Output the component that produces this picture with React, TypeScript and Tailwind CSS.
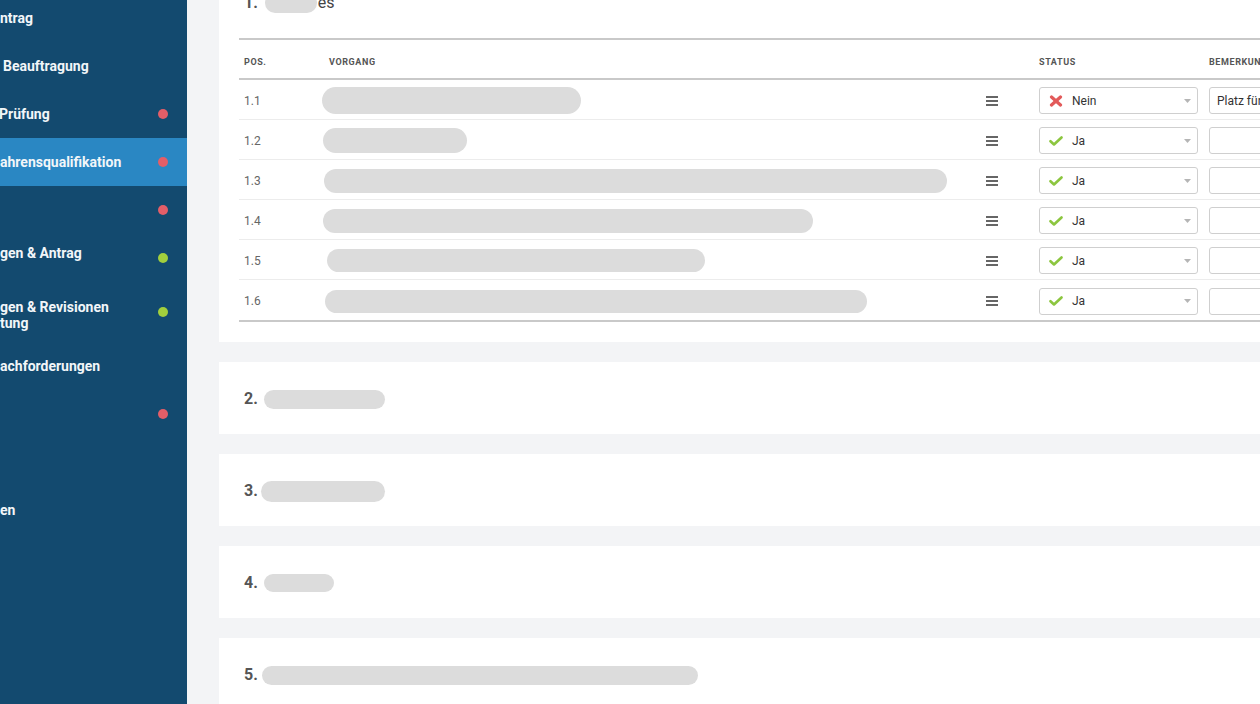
import React from 'react';

interface NavItem {
  lines: string[];
  dot?: 'red' | 'green';
  active?: boolean;
  shift?: string;
}

const navItems: NavItem[] = [
  { lines: ['ntrag'] },
  { lines: ['Beauftragung'], shift: 'pl-[3px]' },
  { lines: ['Prüfung'], dot: 'red', shift: '-ml-[1px]' },
  { lines: ['ahrensqualifikation'], dot: 'red', active: true },
  { lines: [], dot: 'red' },
  { lines: ['gen & Antrag', ''], dot: 'green' },
  { lines: ['gen & Revisionen', 'tung'], dot: 'green' },
  { lines: ['achforderungen'] },
  { lines: [], dot: 'red' },
  { lines: [] },
  { lines: ['en'] },
  { lines: [] },
  { lines: [] },
  { lines: [] },
];

interface Row {
  pos: string;
  pill: string;
  ok: boolean;
  note?: string;
}

const rows: Row[] = [
  { pos: '1.1', pill: 'ml-[-2px] w-[259px] h-[27px]', ok: false, note: 'Platz für Bemerkungen' },
  { pos: '1.2', pill: 'ml-[-1px] w-[144px] h-[25px]', ok: true },
  { pos: '1.3', pill: 'ml-0 w-[623px] h-[24px]', ok: true },
  { pos: '1.4', pill: 'ml-[-1px] w-[490px] h-[24px]', ok: true },
  { pos: '1.5', pill: 'ml-[3px] w-[378px] h-[23px]', ok: true },
  { pos: '1.6', pill: 'ml-[1px] w-[542px] h-[23px]', ok: true },
];

const sections = [
  { no: '2.', pill: 'ml-[6px] w-[121px] h-[19px]' },
  { no: '3.', pill: 'ml-[3px] w-[124px] h-[21px]' },
  { no: '4.', pill: 'ml-[6px] w-[70px] h-[18px]' },
  { no: '5.', pill: 'ml-[4px] w-[436px] h-[19px]' },
];

const MenuIcon = () => (
  <svg width="12" height="10" viewBox="0 0 12 10" fill="#666">
    <rect x="0" y="0" width="12" height="2" />
    <rect x="0" y="4" width="12" height="2" />
    <rect x="0" y="8" width="12" height="2" />
  </svg>
);

const CrossIcon = () => (
  <svg width="14" height="12" viewBox="0 0 14 12" fill="none" stroke="#e25a5a" strokeWidth="3.2" strokeLinecap="round">
    <line x1="2.5" y1="2" x2="11.5" y2="10" />
    <line x1="11.5" y1="2" x2="2.5" y2="10" />
  </svg>
);

const CheckIcon = () => (
  <svg width="14" height="10" viewBox="0 0 14 10" fill="none" stroke="#8cc63f" strokeWidth="2.6" strokeLinecap="round" strokeLinejoin="round">
    <path d="M1.5 5.2 L5 8.5 L12.5 1.5" />
  </svg>
);

const Sidebar: React.FC = () => (
  <aside className="w-[187px] shrink-0 bg-[#134a6f] overflow-hidden">
    <div className="mt-[-6px]">
      {navItems.map((item, i) => (
        <div
          key={i}
          className={`flex items-center justify-between pr-[19px] ${item.lines.length > 1 ? 'h-[54px]' : 'h-12'} ${item.active ? 'bg-[#2a87c3]' : ''}`}
        >
          <div className={`text-[14px] font-bold leading-[16px] text-[#f2f6f9] whitespace-nowrap ${item.shift ?? ''}`}>
            {item.lines.map((l, j) => (
              <div key={j} className="h-4">{l}</div>
            ))}
          </div>
          {item.dot && (
            <span
              className={`w-[10px] h-[10px] rounded-full shrink-0 ${item.dot === 'red' ? 'bg-[#e35e68]' : 'bg-[#a2cf3d]'} ${item.lines.length > 1 ? 'mt-[-6px]' : ''}`}
            />
          )}
        </div>
      ))}
    </div>
  </aside>
);

const StatusSelect: React.FC<{ ok: boolean }> = ({ ok }) => (
  <div className="w-[159px] h-[27px] border border-[#cfcfcf] rounded-[3px] bg-white flex items-center pl-[9px] pr-[6px]">
    <span className="w-[14px] flex justify-center">{ok ? <CheckIcon /> : <CrossIcon />}</span>
    <span className="ml-[9px] text-[12px] text-[#333] flex-1">{ok ? 'Ja' : 'Nein'}</span>
    <svg width="7" height="4" viewBox="0 0 7 4" fill="#b5b5b5">
      <path d="M0 0 L7 0 L3.5 4 Z" />
    </svg>
  </div>
);

const App: React.FC = () => {
  return (
    <div className="flex h-[704px] overflow-hidden font-[Roboto,sans-serif]">
      <Sidebar />
      <main className="flex-1 bg-[#f3f4f6] overflow-hidden pl-8">
        <div className="w-[1240px] mt-[-34px] flex flex-col gap-5">
          <section className="bg-white px-5 pt-[25px] pb-5">
            <h2 className="pl-[5px] h-6 flex items-center text-[16px] font-bold text-[#555]">
              <span>1.</span>
              <span className="ml-[7px] w-[52px] h-[20px] rounded-full bg-[#dcdcdc]" />
              <span className="ml-[1px] font-normal text-[#444]">es</span>
            </h2>

            <div className="mt-[23px] border-t-2 border-b-2 border-[#c9c9c9]">
              <div className="flex items-center h-10 border-b-2 border-[#c9c9c9] pt-[7px] text-[9px] font-bold tracking-[0.6px] text-[#555] uppercase">
                <div className="w-[85px] px-[5px]">Pos.</div>
                <div className="w-[656px] px-[5px]">Vorgang</div>
                <div className="w-[24px]" />
                <div className="w-[30px]" />
                <div className="w-[170px] px-[5px]">Status</div>
                <div className="flex-1 px-[5px]">Bemerkung</div>
              </div>

              {rows.map((r, i) => (
                <div
                  key={r.pos}
                  className={`flex items-center h-10 pt-[2px] ${i < rows.length - 1 ? 'border-b border-[#ececec]' : ''}`}
                >
                  <div className="w-[85px] px-[5px] text-[12px] text-[#666]">{r.pos}</div>
                  <div className="w-[656px] flex items-center">
                    <span className={`rounded-full bg-[#dcdcdc] ${r.pill}`} />
                  </div>
                  <div className="w-[24px] flex justify-center">
                    <MenuIcon />
                  </div>
                  <div className="w-[30px]" />
                  <div className="w-[170px] px-[5px]">
                    <StatusSelect ok={r.ok} />
                  </div>
                  <div className="flex-1 px-[5px]">
                    <div className="h-[27px] border border-[#cfcfcf] rounded-[3px] bg-white flex items-center px-[7px] text-[12px] text-[#333] whitespace-nowrap overflow-hidden">
                      {r.note ?? ''}
                    </div>
                  </div>
                </div>
              ))}
            </div>
          </section>

          {sections.map(s => (
            <section key={s.no} className="bg-white px-5 pt-[25px] pb-[23px]">
              <h2 className="pl-[5px] h-6 flex items-center text-[16px] font-bold text-[#555]">
                <span>{s.no}</span>
                <span className={`rounded-full bg-[#dcdcdc] ${s.pill}`} />
              </h2>
            </section>
          ))}
        </div>
      </main>
    </div>
  );
};

export default App;
